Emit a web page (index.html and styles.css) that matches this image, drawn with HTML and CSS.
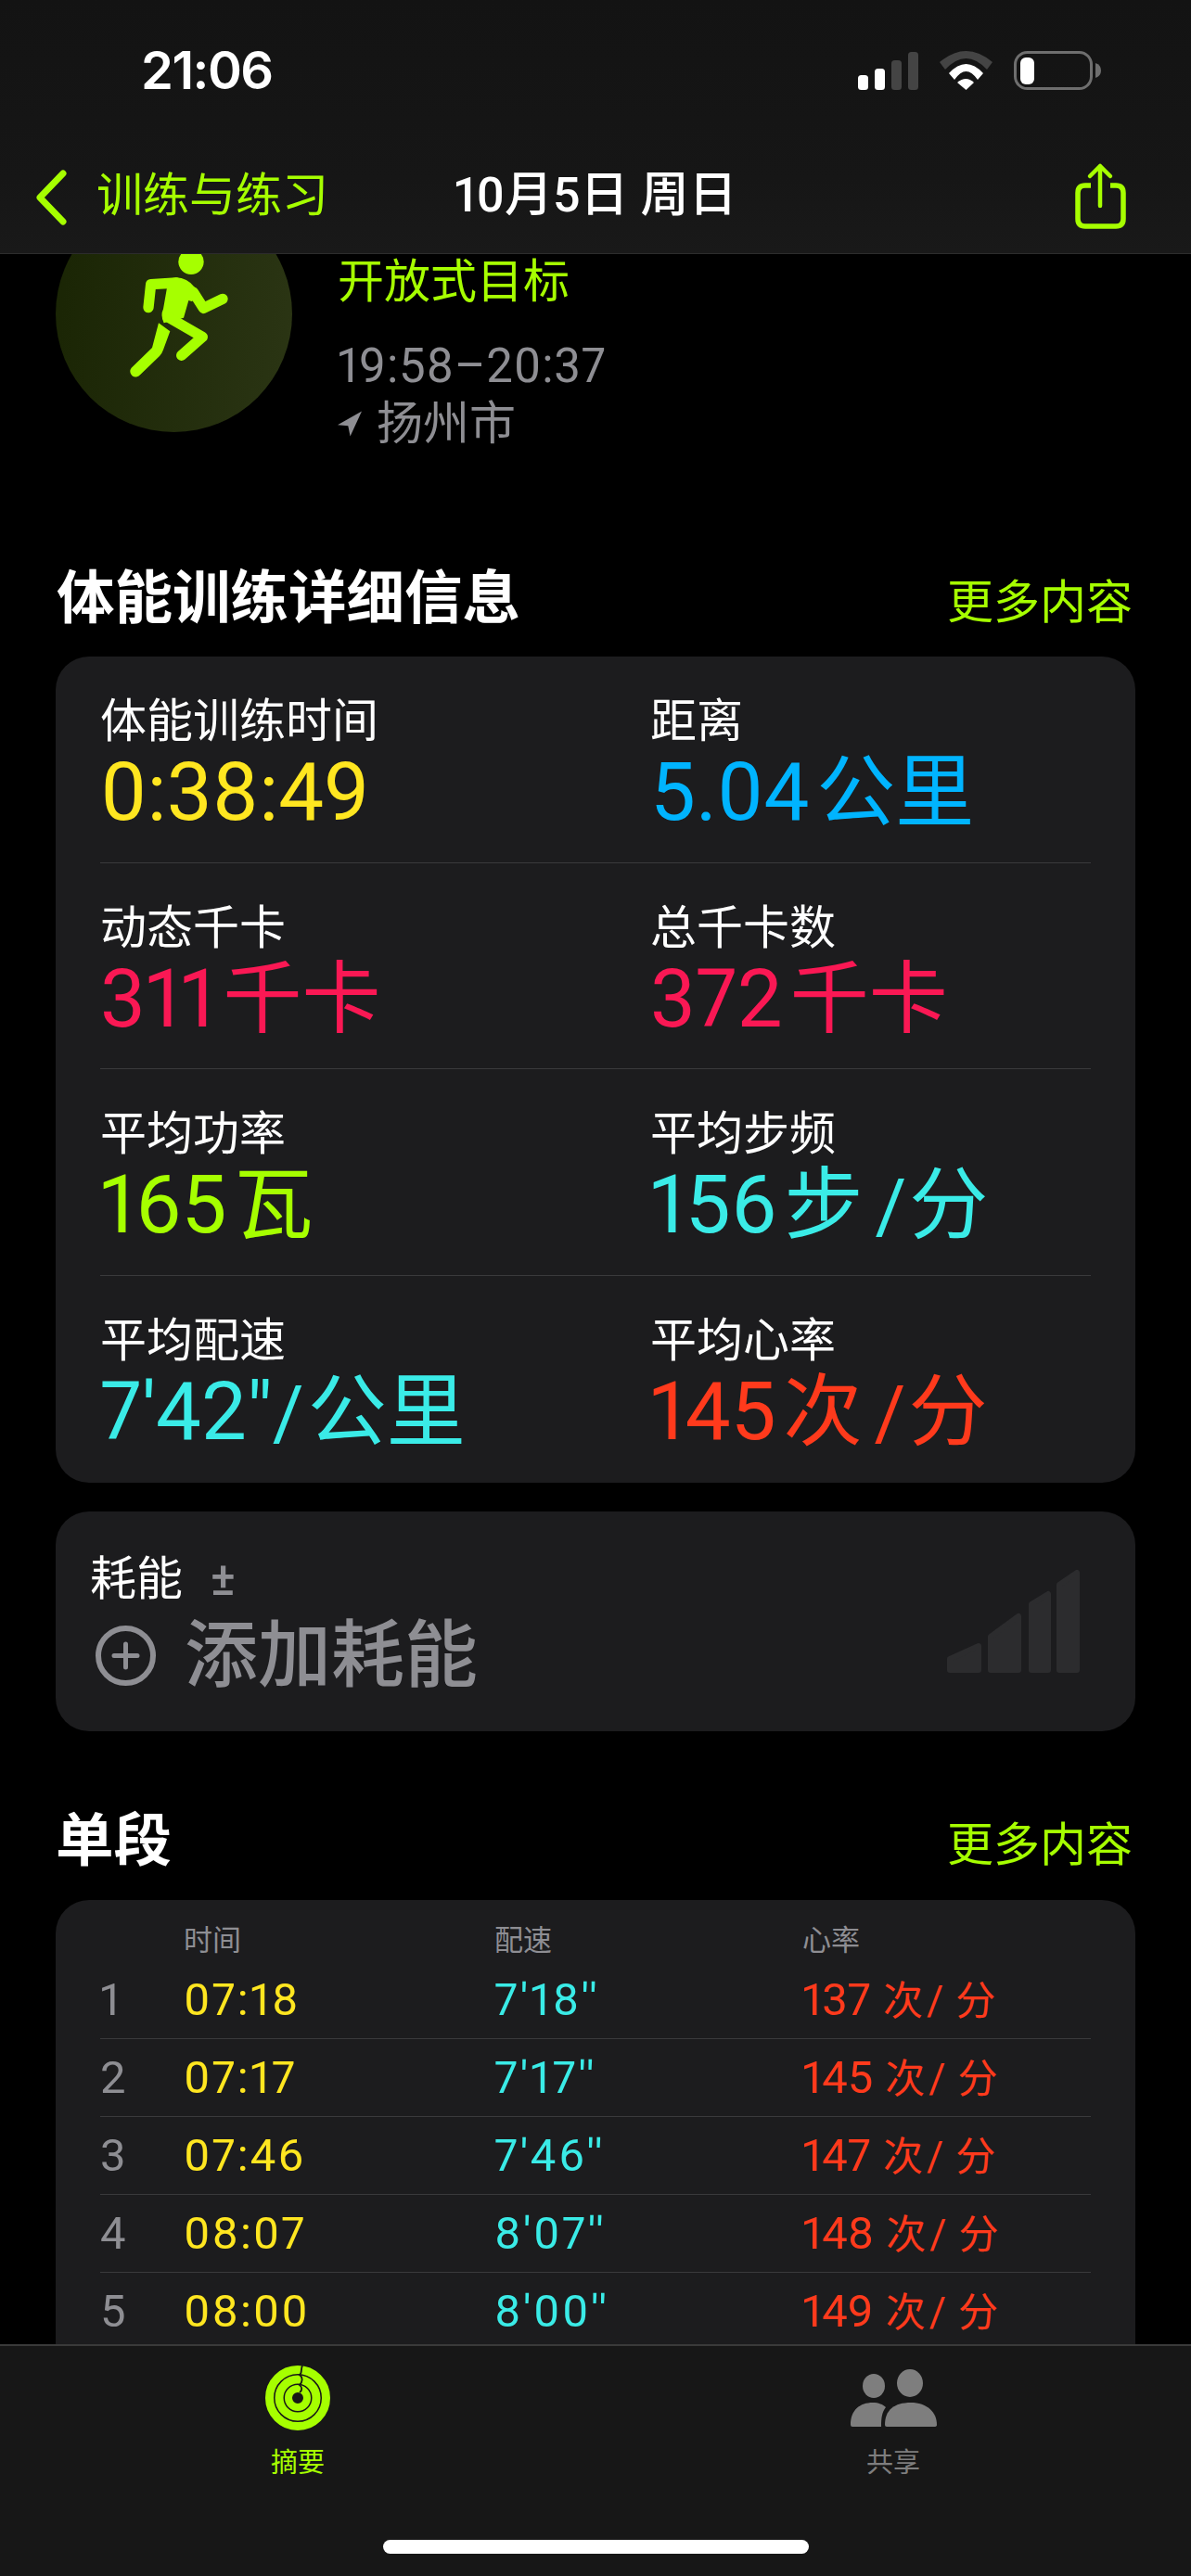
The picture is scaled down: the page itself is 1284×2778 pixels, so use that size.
FILE: index.html
```html
<!DOCTYPE html>
<html lang="zh-CN">
<head>
<meta charset="utf-8">
<title>体能训练详细信息</title>
<link rel="stylesheet" href="styles.css">
</head>
<body>
<div class="phone">
  <header class="top-bar">
    <div class="status">
      <span class="clock">21:06</span>
      <div class="status-icons">
        <svg class="signal" viewBox="0 0 65 41" width="65" height="41">
          <rect x="0" y="25" width="11" height="16" rx="3.5" fill="#fff"/>
          <rect x="18" y="18" width="11" height="23" rx="3.5" fill="#fff"/>
          <rect x="36" y="9" width="11" height="32" rx="3.5" fill="#444"/>
          <rect x="54" y="0" width="11" height="41" rx="3.5" fill="#444"/>
        </svg>
        <svg class="wifi" viewBox="0 0 57 42" width="57" height="42">
          <path d="M0 12 Q28.5 -12 57 12 L51 20 Q28.5 -4 6 20Z" fill="#444"/>
          <path d="M10 24 Q28.5 4 47 24 L41 31 Q28.5 13 16 31Z" fill="#fff"/>
          <path d="M19 34 Q28.5 26 37 34 L28.5 42Z" fill="#fff"/>
        </svg>
        <svg class="battery" viewBox="0 0 94 42" width="94" height="42">
          <rect x="1.5" y="1.5" width="82" height="39" rx="13" fill="none" stroke="#6e6e6e" stroke-width="3"/>
          <rect x="7" y="7" width="15" height="29" rx="6" fill="#fff"/>
          <path d="M88 13 Q94 15 94 21 Q94 27 88 29Z" fill="#6e6e6e"/>
        </svg>
      </div>
    </div>
    <nav class="nav">
      <a class="back">
        <svg viewBox="0 0 34 60" width="34" height="60"><path d="M30 4 L5 30 L30 56" fill="none" stroke="#a6ff00" stroke-width="7" stroke-linecap="round" stroke-linejoin="round"/></svg>
        <span>训练与练习</span>
      </a>
      <h1 class="nav-title">10月5日 周日</h1>
      <svg class="share" viewBox="0 0 60 76" width="60" height="76">
        <path d="M20 25 H14 Q6 25 6 33 V61 Q6 69 14 69 H47 Q55 69 55 61 V33 Q55 25 47 25 H41" fill="none" stroke="#a6ff00" stroke-width="5.5"/>
        <path d="M30 47 V4 M19 15 L30 4 L41 15" fill="none" stroke="#a6ff00" stroke-width="4.5" stroke-linecap="round" stroke-linejoin="round"/>
      </svg>
    </nav>
  </header>

  <main class="content">
    <section class="hero">
      <div class="hero-badge">
        <svg viewBox="0 0 255 255" width="255" height="255">
          <g transform="translate(-10 59) scale(.33333)" fill="#a6ff00">
            <circle cx="468" cy="37" r="41"/>
            <path d="M395 92 L420 88 Q455 88 480 120 L500 148 L470 165 L460 162 L444 218 L380 235 Q368 210 378 190Z"/>
            <path d="M330 185 L338 110 L420 105" fill="none" stroke="#a6ff00" stroke-width="34" stroke-linecap="round" stroke-linejoin="round"/>
            <path d="M475 135 L508 187 L570 157" fill="none" stroke="#a6ff00" stroke-width="34" stroke-linecap="round" stroke-linejoin="round"/>
            <path d="M392 215 L505 280 L437 340" fill="none" stroke="#a6ff00" stroke-width="34" stroke-linecap="round" stroke-linejoin="round"/>
            <path d="M363 235 L400 262 L378 322 Q374 334 366 342 L303 403 A18 18 0 0 1 275 380 L342 315Z"/>
          </g>
        </svg>
      </div>
      <div class="hero-text">
        <div class="goal">开放式目标</div>
        <div class="span-time">19:58–20:37</div>
        <div class="place">
          <svg viewBox="0 0 23 24" width="26" height="28"><path d="M23 0 L0 13 L10 14 L12 24Z" fill="#8e8e93"/></svg>
          <span>扬州市</span>
        </div>
      </div>
    </section>

    <div class="section-head first">
      <h2>体能训练详细信息</h2>
      <span class="more">更多内容</span>
    </div>
    <section class="card metrics">
      <div class="metric-row">
        <div class="metric"><div class="label">体能训练时间</div><div class="value yellow">0:38:49</div></div>
        <div class="metric"><div class="label">距离</div><div class="value blue">5.04<span class="unit">公里</span></div></div>
      </div>
      <div class="metric-row">
        <div class="metric"><div class="label">动态千卡</div><div class="value pink">311<span class="unit">千卡</span></div></div>
        <div class="metric"><div class="label">总千卡数</div><div class="value pink">372<span class="unit">千卡</span></div></div>
      </div>
      <div class="metric-row">
        <div class="metric"><div class="label">平均功率</div><div class="value green">165<span class="unit">瓦</span></div></div>
        <div class="metric"><div class="label">平均步频</div><div class="value cyan">156<span class="unit">步</span><span class="slash">/</span><span class="per">分</span></div></div>
      </div>
      <div class="metric-row">
        <div class="metric"><div class="label">平均配速</div><div class="value cyan">7'42"<span class="slash tight">/</span><span class="per">公里</span></div></div>
        <div class="metric"><div class="label">平均心率</div><div class="value red">145<span class="unit">次</span><span class="slash">/</span><span class="per">分</span></div></div>
      </div>
    </section>

    <section class="card effort">
      <div class="effort-main">
        <div class="effort-label">耗能<span class="plusminus">±</span></div>
        <div class="effort-add">
          <svg viewBox="0 0 65 65" width="65" height="65">
            <circle cx="32.5" cy="32.5" r="29.5" fill="none" stroke="#8e8e93" stroke-width="6"/>
            <path d="M32.5 20 V45 M20 32.5 H45" stroke="#8e8e93" stroke-width="5" stroke-linecap="round"/>
          </svg>
          <span>添加耗能</span>
        </div>
      </div>
      <svg class="effort-chart" viewBox="0 0 144 111" width="144" height="111">
        <g fill="#2c2c2e" stroke="#2c2c2e" stroke-width="6" stroke-linejoin="round">
          <path d="M4 96 L35 82 V108 H4Z"/>
          <path d="M48 72 L78 50 V108 H48Z"/>
          <path d="M92 37 L110 26 V108 H92Z"/>
          <path d="M122 16 L141 3 V108 H122Z"/>
        </g>
      </svg>
    </section>

    <div class="section-head second">
      <h2>单段</h2>
      <span class="more">更多内容</span>
    </div>
    <section class="card splits">
      <div class="split-head"><span></span><span>时间</span><span>配速</span><span>心率</span></div>
      <div class="split"><span class="num">1</span><span class="yellow time">07:18</span><span class="cyan pace">7'18''</span><span class="red">137<span class="s-unit">次</span><span class="s-slash">/</span><span class="s-per">分</span></span></div>
      <div class="split"><span class="num">2</span><span class="yellow time">07:17</span><span class="cyan pace">7'17''</span><span class="red">145<span class="s-unit">次</span><span class="s-slash">/</span><span class="s-per">分</span></span></div>
      <div class="split"><span class="num">3</span><span class="yellow time">07:46</span><span class="cyan pace">7'46''</span><span class="red">147<span class="s-unit">次</span><span class="s-slash">/</span><span class="s-per">分</span></span></div>
      <div class="split"><span class="num">4</span><span class="yellow time">08:07</span><span class="cyan pace">8'07''</span><span class="red">148<span class="s-unit">次</span><span class="s-slash">/</span><span class="s-per">分</span></span></div>
      <div class="split"><span class="num">5</span><span class="yellow time">08:00</span><span class="cyan pace">8'00''</span><span class="red">149<span class="s-unit">次</span><span class="s-slash">/</span><span class="s-per">分</span></span></div>
    </section>
  </main>

  <footer class="tab-bar">
    <div class="tabs">
      <div class="tab active">
        <div class="tab-icon">
          <svg viewBox="0 0 70 70" width="70" height="70">
            <g fill="none" stroke="#a6ff00">
              <circle cx="35" cy="35" r="30.5" stroke-width="9"/>
              <circle cx="35" cy="35" r="20" stroke-width="9"/>
              <circle cx="35" cy="35" r="10" stroke-width="8"/>
            </g>
            <path d="M40 0 C38 4 40 8 37 10 C41 13 40 18 37 21 C40 23 40 27 37 29" fill="none" stroke="#161616" stroke-width="1.8"/>
          </svg>
        </div>
        <span>摘要</span>
      </div>
      <div class="tab">
        <div class="tab-icon">
          <svg viewBox="0 0 93 62" width="93" height="62" fill="#7e7e7e">
            <ellipse cx="25" cy="18" rx="12" ry="13"/>
            <ellipse cx="64" cy="15" rx="14" ry="15"/>
            <path d="M0 60 C0 44 10 36 24 36 C30 36 35 38 38 41 C34 46 33 52 33 62 H2 Q0 62 0 60Z"/>
            <path d="M37 60 C37 44 47 36 65 36 C82 36 93 46 93 60 Q93 62 90 62 H39 Q37 62 37 60Z"/>
          </svg>
        </div>
        <span>共享</span>
      </div>
    </div>
    <div class="home-bar"></div>
  </footer>
</div>
</body>
</html>
```

FILE: styles.css
```css
* { box-sizing: border-box; }

html, body {
  margin: 0;
  padding: 0;
  background: #000;
}

body {
  font-family: Roboto, "Noto Sans CJK SC", sans-serif;
  font-variant-numeric: proportional-nums;
  color: #fff;
}

.phone {
  width: 1284px;
  height: 2778px;
  display: flex;
  flex-direction: column;
  overflow: hidden;
  background: #000;
}

/* Top bar */
.top-bar {
  flex: none;
  height: 274px;
  background: linear-gradient(180deg, #131313 0%, #161616 70%, #191919 100%);
  border-bottom: 1px solid #2c2c2c;
}

.status {
  height: 62px;
  margin-top: 45px;
  padding: 0 97px 0 152px;
  display: flex;
  align-items: center;
  justify-content: space-between;
}

.clock {
  font-family: Inter, sans-serif;
  font-size: 56px;
  font-weight: 600;
  letter-spacing: -1.5px;
}

.status-icons {
  display: flex;
  align-items: center;
}

.signal { margin-right: 23px; }
.wifi { margin-right: 23px; }

.nav {
  height: 76px;
  margin-top: 53px;
  padding: 0 38px;
  display: grid;
  grid-template-columns: 1fr auto 1fr;
  align-items: center;
}

.back {
  display: flex;
  align-items: center;
  gap: 32px;
  color: #a6ff00;
  font-size: 50px;
}

.back svg { margin-top: 14px; }

.nav-title {
  margin: 0;
  font-size: 52px;
  font-weight: 500;
}

.share {
  justify-self: end;
  margin-right: 30px;
  margin-top: 15px;
}

/* Scrolling content */
.content {
  flex: 1;
  min-height: 0;
  overflow: hidden;
  padding: 0 60px;
}

.hero {
  display: flex;
  gap: 49px;
  margin-top: -63px;
}

.hero-badge {
  flex: none;
  width: 255px;
  height: 255px;
  border-radius: 50%;
  background: linear-gradient(95deg, #1a2504, #2b3514);
}

.hero-badge svg { display: block; }

.hero-text {
  padding-top: 63px;
  font-size: 50px;
  line-height: 60px;
}

.goal { color: #a6ff00; }

.span-time {
  margin-top: 31px;
  font-size: 51px;
  letter-spacing: .8px;
  color: #8e8e93;
}

.place {
  margin-top: 2px;
  display: flex;
  align-items: center;
  gap: 16px;
  color: #8e8e93;
  font-size: 50px;
}

.section-head {
  display: flex;
  align-items: baseline;
  justify-content: space-between;
  padding: 0 3px 0 1px;
  line-height: 76px;
}

.section-head h2 {
  margin: 0;
  font-size: 62.5px;
  font-weight: 700;
}

.section-head.first { margin-top: 121px; margin-bottom: 20px; }
.section-head.second { margin-top: 81px; margin-bottom: 21px; padding-left: 0; }

.more {
  color: #a6ff00;
  font-size: 50px;
}

.card {
  background: #1c1c1e;
  border-radius: 36px;
}

/* Workout metrics */
.metrics {
  height: 891px;
  padding: 0 48px;
}

.metric-row {
  height: 222.5px;
  padding-top: 40px;
  display: grid;
  grid-template-columns: 593px 1fr;
  border-bottom: 1.5px solid #3a3a3c;
}

.metric-row:last-child { border-bottom: 0; }

.label {
  font-size: 50px;
  line-height: 60px;
}

.value {
  font-size: 87px;
  line-height: 88px;
  white-space: nowrap;
  margin-top: 2px;
}

.unit {
  font-size: 85px;
  margin-left: 8px;
}

.per { font-size: 85px; }

.slash {
  font-size: 82px;
  margin: 0 3px 0 13px;
}

.slash.tight { margin: 0 4px 0 0; }

.yellow { color: #ffe620; }
.blue { color: #00b4ff; }
.pink { color: #fa1854; }
.green { color: #a6ff00; }
.cyan { color: #3aebe7; }
.red { color: #ff3a1c; }

/* Active energy */
.effort {
  height: 237px;
  margin-top: 31px;
  padding: 0 60px 0 37px;
  display: flex;
  align-items: center;
  justify-content: space-between;
}

.effort-main { margin-top: 3px; }

.effort-label {
  font-size: 50px;
  line-height: 60px;
  margin-top: 3px;
}

.plusminus {
  margin-left: 30px;
  color: #8e8e93;
  font-size: 50px;
  font-weight: 500;
}

.effort-add {
  margin-top: 8px;
  padding-left: 6px;
  display: flex;
  align-items: center;
  gap: 31px;
  color: #8e8e93;
  font-size: 79px;
  font-weight: 500;
  line-height: 90px;
}

/* Splits table */
.splits {
  padding: 18px 48px 0;
  height: 600px;
}

.split-head,
.split {
  display: grid;
  grid-template-columns: 90px 335px 332px 1fr;
}

.split-head {
  height: 39px;
  margin-bottom: 9px;
  align-items: center;
  color: #8e8e93;
  font-size: 31px;
}

.split {
  height: 84px;
  align-items: baseline;
  font-size: 49px;
  line-height: 84px;
  border-bottom: 1.5px solid #3a3a3c;
}

.time { letter-spacing: 2px; }
.pace { letter-spacing: 2.5px; }

.num { color: #8e8e93; }

.s-unit { font-size: 43px; margin-left: 13px; }
.s-per { font-size: 43px; }
.s-slash { font-size: 44px; margin: 0 13px 0 4px; }

/* Bottom tab bar */
.tab-bar {
  flex: none;
  height: 250px;
  background: #171717;
  border-top: 2px solid #3a3a3a;
  display: flex;
  flex-direction: column;
}

.tabs {
  display: grid;
  grid-template-columns: 1fr 1fr;
  padding-top: 21px;
}

.tab {
  display: flex;
  flex-direction: column;
  align-items: center;
  color: #7e7e7e;
  font-size: 29px;
  line-height: 36px;
}

.tab.active { color: #a6ff00; }

.tab-icon {
  height: 70px;
  margin-bottom: 17px;
  display: flex;
  align-items: center;
}

.home-bar {
  width: 459px;
  height: 15px;
  margin: auto auto 24px;
  border-radius: 8px;
  background: #fff;
}
```
